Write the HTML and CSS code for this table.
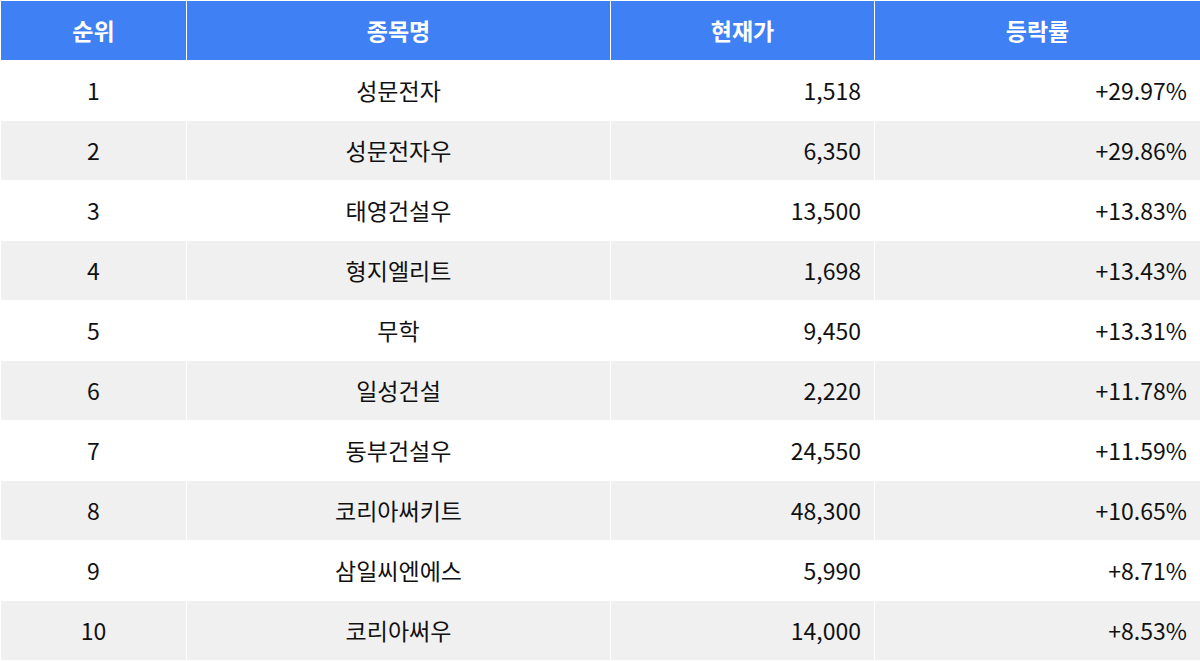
FILE: index.html
```html
<!DOCTYPE html>
<html lang="ko">
<head>
<meta charset="utf-8">
<title>등락률 상위 종목</title>
<link rel="stylesheet" href="styles.css">
</head>
<body>
<table class="rank-table">
  <colgroup>
    <col class="c-rank">
    <col class="c-name">
    <col class="c-price">
    <col class="c-rate">
  </colgroup>
  <thead>
    <tr><th>순위</th><th>종목명</th><th>현재가</th><th>등락률</th></tr>
  </thead>
  <tbody>
    <tr><td class="center">1</td><td class="center">성문전자</td><td class="num">1,518</td><td class="num">+29.97%</td></tr>
    <tr><td class="center">2</td><td class="center">성문전자우</td><td class="num">6,350</td><td class="num">+29.86%</td></tr>
    <tr><td class="center">3</td><td class="center">태영건설우</td><td class="num">13,500</td><td class="num">+13.83%</td></tr>
    <tr><td class="center">4</td><td class="center">형지엘리트</td><td class="num">1,698</td><td class="num">+13.43%</td></tr>
    <tr><td class="center">5</td><td class="center">무학</td><td class="num">9,450</td><td class="num">+13.31%</td></tr>
    <tr><td class="center">6</td><td class="center">일성건설</td><td class="num">2,220</td><td class="num">+11.78%</td></tr>
    <tr><td class="center">7</td><td class="center">동부건설우</td><td class="num">24,550</td><td class="num">+11.59%</td></tr>
    <tr><td class="center">8</td><td class="center">코리아써키트</td><td class="num">48,300</td><td class="num">+10.65%</td></tr>
    <tr><td class="center">9</td><td class="center">삼일씨엔에스</td><td class="num">5,990</td><td class="num">+8.71%</td></tr>
    <tr><td class="center">10</td><td class="center">코리아써우</td><td class="num">14,000</td><td class="num">+8.53%</td></tr>
  </tbody>
</table>
</body>
</html>
```
FILE: styles.css
```css
html, body {
  margin: 0;
  padding: 0;
  background: #ffffff;
}
body {
  font-family: "Noto Sans CJK KR", "Noto Sans", sans-serif;
  color: #111111;
}
.rank-table {
  width: 1200px;
  border-collapse: collapse;
  table-layout: fixed;
}
.c-rank { width: 186px; }
.c-name { width: 424px; }
.c-price { width: 264px; }
.c-rate { width: 326px; }
.rank-table th,
.rank-table td {
  height: 60px;
  padding: 0 13px;
  border: 1px solid #ffffff;
  font-size: 23px;
  line-height: 1;
  box-sizing: border-box;
}
.rank-table th {
  background: #4080f5;
  color: #ffffff;
  font-weight: 700;
  text-align: center;
}
.rank-table tbody tr:nth-child(even) td {
  background: #f0f0f0;
}
.center { text-align: center; }
.num { text-align: right; }
```
